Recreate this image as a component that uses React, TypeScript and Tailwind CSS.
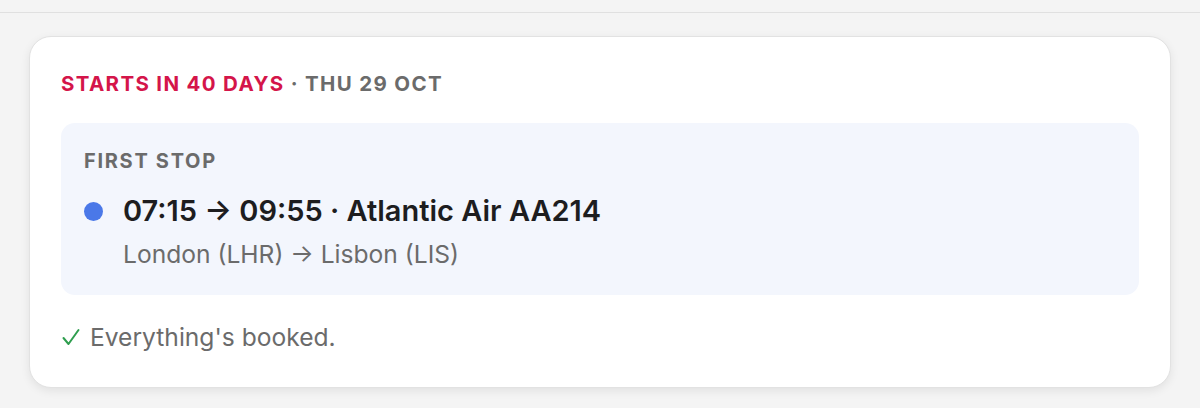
import React from "react";

export default function App() {
  return (
    <div
      className="w-[1200px] h-[408px] bg-[#f4f4f4] overflow-hidden"
      style={{ fontFamily: "Inter, 'Noto Sans', sans-serif" }}
    >
      <div className="h-[13px] border-b border-[#e0e0e0]" />
      <div className="px-[29px] pt-[23px]">
        <div className="bg-white rounded-[22px] border border-[#e2e2e2] shadow-[0_3px_10px_rgba(0,0,0,0.08)] px-[31px] pt-[33px] pb-[34px]">
          <div className="text-[20.5px] font-bold tracking-[0.065em] leading-[28px]">
            <span className="text-[#d4154a]">STARTS IN 40 DAYS</span>
            <span className="text-[#6b6b6b]"> · THU 29 OCT</span>
          </div>
          <div className="mt-[25px] bg-[#f3f6fd] rounded-[14px] px-[23px] pt-[25px] pb-[25px]">
            <div className="text-[20px] font-bold tracking-[0.085em] text-[#6b6b6b] leading-[26px]">
              FIRST STOP
            </div>
            <div className="mt-[19px] flex items-center gap-[20px]">
              <div className="w-[19px] h-[19px] rounded-full bg-[#4a78e8] shrink-0" />
              <div className="text-[29px] font-semibold text-[#1d1d1f] leading-[36px]">
                07:15 → 09:55 · Atlantic Air AA214
              </div>
            </div>
            <div className="mt-[9px] pl-[39px] text-[24.6px] text-[#6b6b6b] leading-[32px]">
              London (LHR) → Lisbon (LIS)
            </div>
          </div>
          <div className="mt-[26px] flex items-center gap-[10px] text-[24.6px] text-[#6b6b6b] leading-[32px]">
            <svg width="18" height="18" viewBox="0 0 18 18" className="ml-[1px] shrink-0">
              <polyline
                points="1.5,10 6.5,16 16.5,2"
                fill="none"
                stroke="#2f9e4f"
                strokeWidth="2"
                strokeLinecap="round"
                strokeLinejoin="round"
              />
            </svg>
            <span>Everything's booked.</span>
          </div>
        </div>
      </div>
    </div>
  );
}
